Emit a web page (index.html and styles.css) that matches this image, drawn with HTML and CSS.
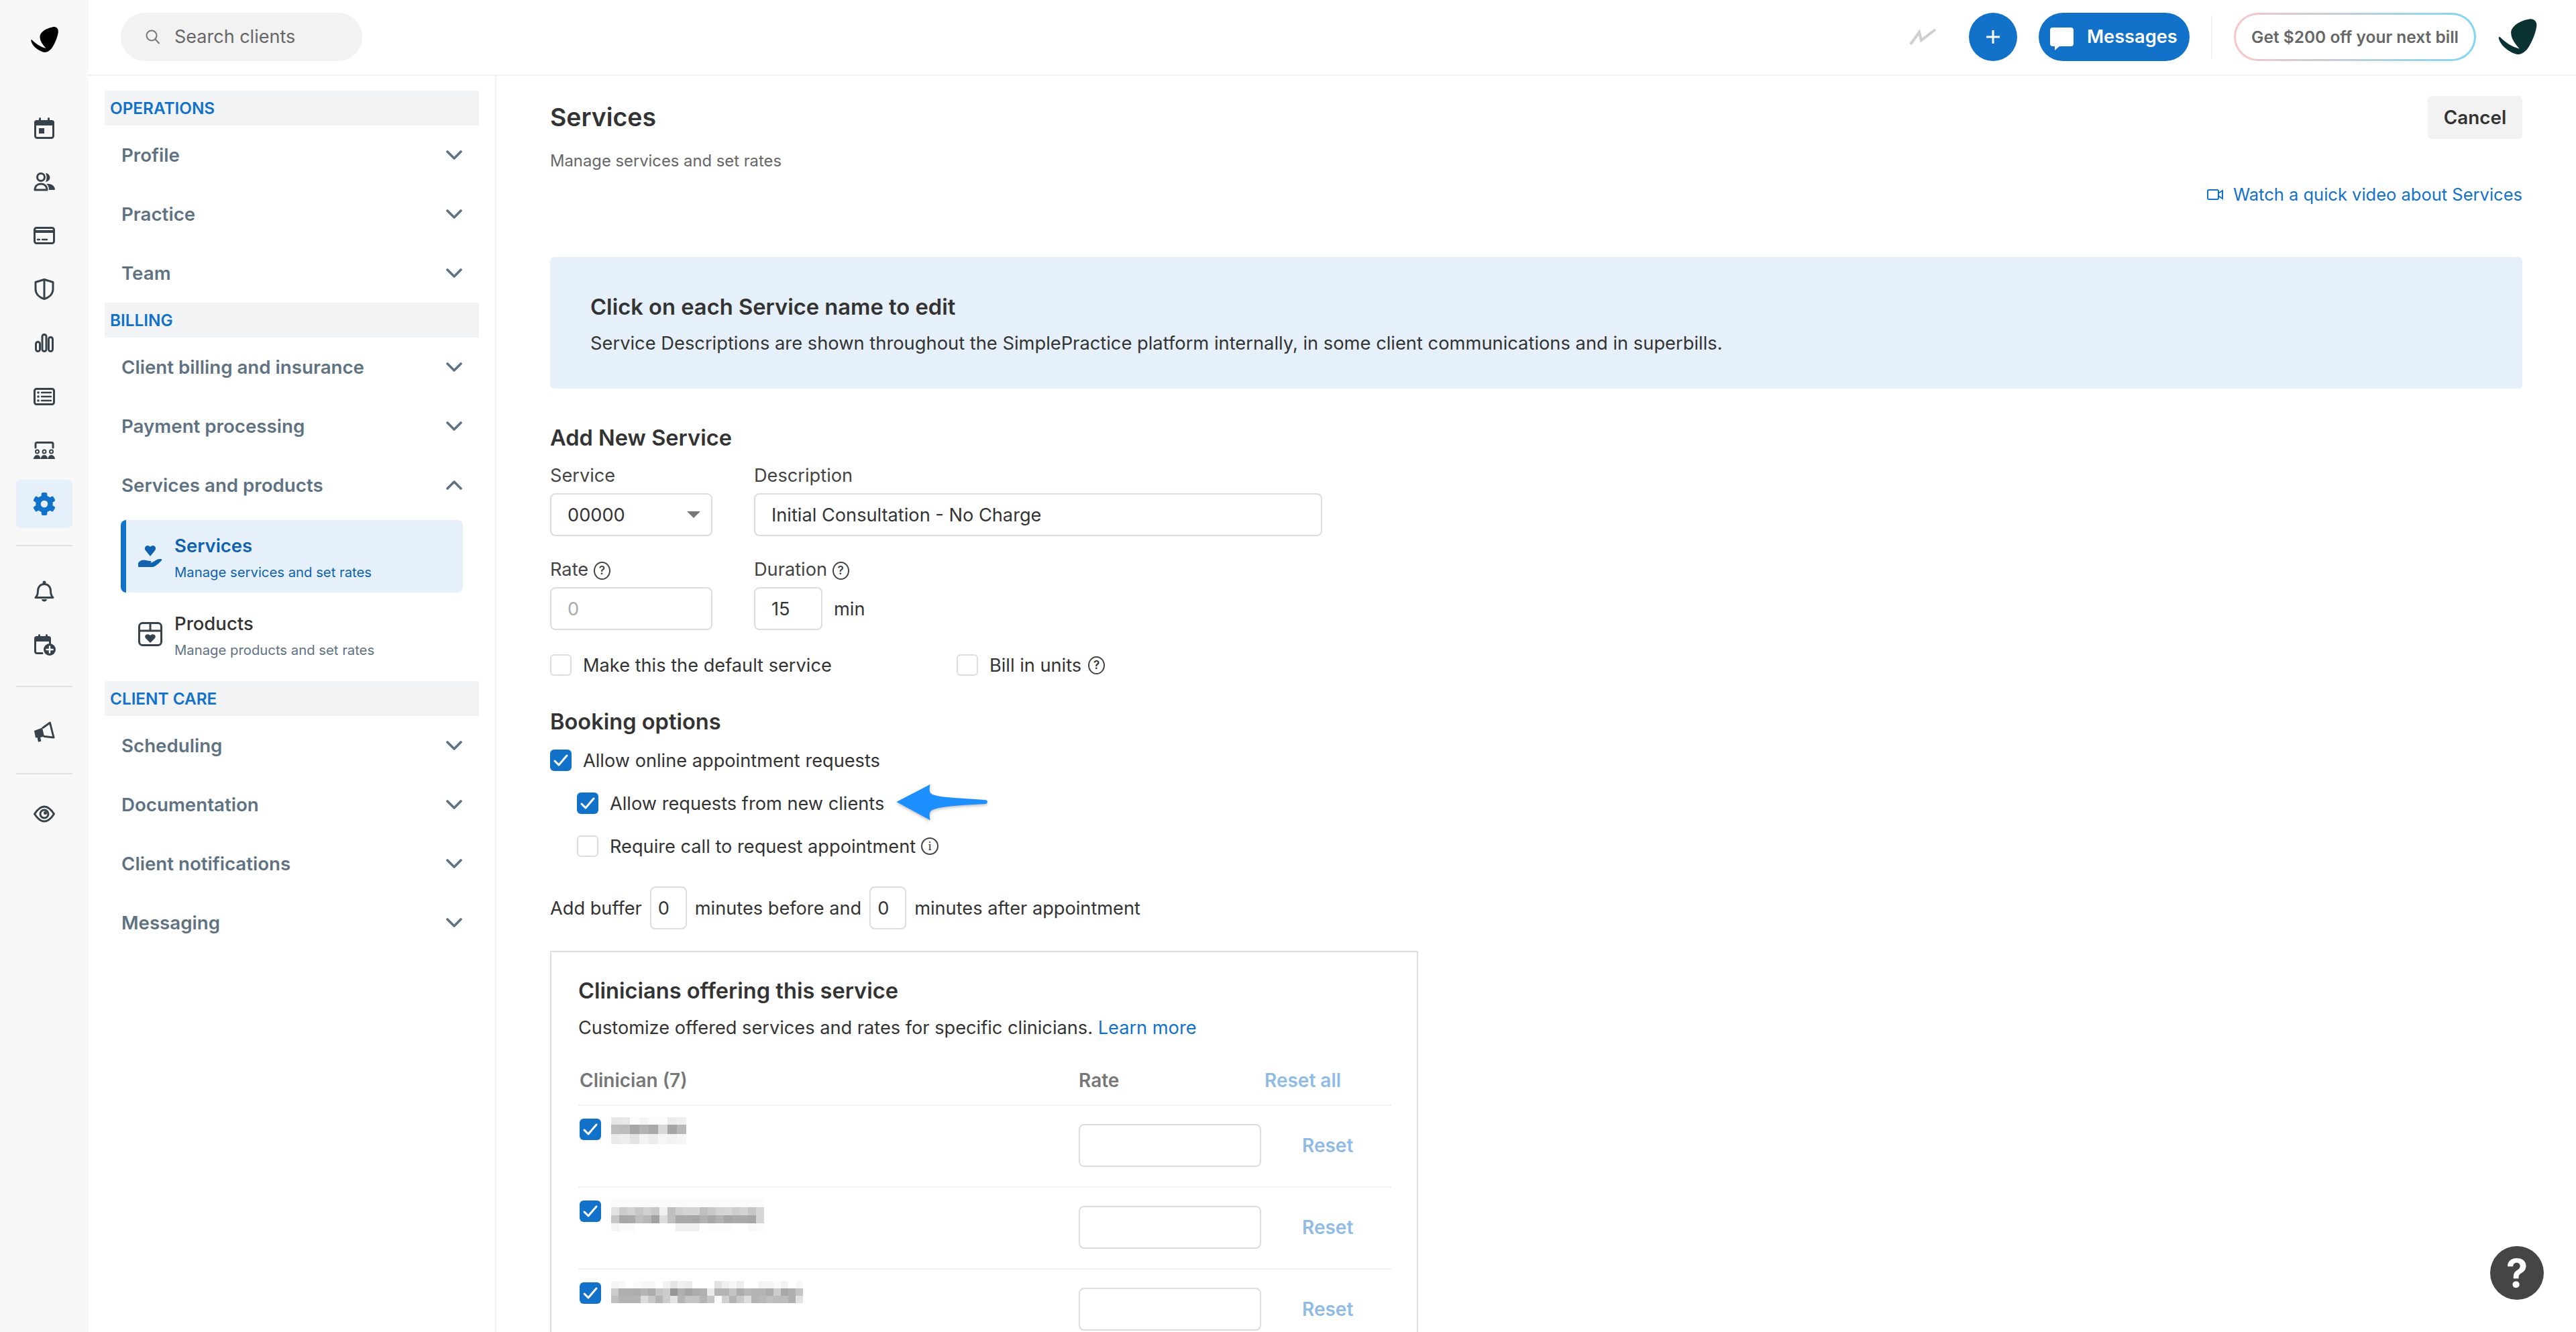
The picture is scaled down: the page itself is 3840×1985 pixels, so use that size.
FILE: index.html
```html
<!DOCTYPE html>
<html lang="en">
<head>
<meta charset="utf-8">
<title>Services</title>
<link rel="stylesheet" href="styles.css">
</head>
<body>
<svg class="sprite" aria-hidden="true">
  <defs>
    <symbol id="leaf" viewBox="0 0 41 38"><path d="M32 .5C37-1 41 2 40.800 7 40.500 14 35 27 31 32 27 37 22 39 18 37.500 10 35 2 28 .3 21 0 19.500 1 18.800 2 19.800 7 25 14 30 22.500 32 17 26 13 20 13.500 14 14 8 23 2 32 .5Z"/></symbol>
    <symbol id="chev" viewBox="0 0 24 14"><path d="M2 2l10 10L22 2" fill="none" stroke="currentColor" stroke-width="3.600" stroke-linecap="round" stroke-linejoin="round"/></symbol>
    <symbol id="tick" viewBox="0 0 32 32"><path d="M7 17l6 6L25 9" fill="none" stroke="#fff" stroke-width="3" stroke-linecap="round" stroke-linejoin="round"/></symbol>
  </defs>
</svg>
<div class="app">
  <nav class="rail">
    <div class="rail-logo"><svg class="logo-small"><use href="#leaf"/></svg></div>
    <a class="rail-item"><svg class="ri" viewBox="0 0 32 32"><rect x="2.500" y="5.500" width="27" height="25" rx="3"/><path class="f" d="M1 8a4 4 0 0 1 4-4h22a4 4 0 0 1 4 4v4H1z"/><rect class="f" x="8" y="0" width="3" height="6" rx="1.500"/><rect class="f" x="21" y="0" width="3" height="6" rx="1.500"/><rect class="f" x="8" y="16" width="8" height="8"/></svg></a>
    <a class="rail-item"><svg class="ri" viewBox="0 0 32 32"><circle cx="11" cy="9" r="5.500"/><path d="M2 28c0-6 4-9 9-9s9 3 9 9z"/><path class="f" d="M18 3a6.500 6.500 0 0 1 0 13c2-3.500 2-9.500 0-13zM23 28h9c0-5-4-9-10-9-1 0-2 .2-2.500.4 2.500 1.600 3.500 4.600 3.500 8.600z"/></svg></a>
    <a class="rail-item"><svg class="ri" viewBox="0 0 32 32"><rect x="1.500" y="4.500" width="29" height="23" rx="3"/><path class="f" d="M1 8h30v4H1z"/><path class="dash" d="M6 22h3M13 22h7"/></svg></a>
    <a class="rail-item"><svg class="ri" viewBox="0 0 32 32"><path d="M16 1.500l13 4v10c0 8-6 13-13 15-7-2-13-7-13-15v-10z"/><path d="M16 2v28"/></svg></a>
    <a class="rail-item"><svg class="ri" viewBox="0 0 32 32"><rect x="3.500" y="14.500" width="6" height="14" rx="3"/><rect x="13" y="3.500" width="6" height="25" rx="3"/><rect x="22.500" y="7.500" width="6" height="21" rx="3"/></svg></a>
    <a class="rail-item"><svg class="ri" viewBox="0 0 32 32"><rect x="1.500" y="4.500" width="29" height="23" rx="3"/><path class="dash" d="M12 10h14M12 16h14M12 22h14"/><circle class="f" cx="7" cy="10" r="1.800"/><circle class="f" cx="7" cy="16" r="1.800"/><circle class="f" cx="7" cy="22" r="1.800"/></svg></a>
    <a class="rail-item"><svg class="ri" viewBox="0 0 32 32"><path d="M3 12V6.500a2 2 0 0 1 2-2h22a2 2 0 0 1 2 2V12"/><circle class="thin" cx="5.500" cy="18" r="2.500"/><circle class="thin" cx="16" cy="18" r="2.500"/><circle class="thin" cx="26.500" cy="18" r="2.500"/><path class="f" d="M0 29c0-3 2.500-6 5.500-6s5 3 5 6zM10.800 29c0-3 2.200-6 5.200-6s5.200 3 5.200 6zM21.500 29c0-3 2-6 5-6s5.500 3 5.500 6z"/></svg></a>
    <a class="rail-item active"><svg class="gear" viewBox="0 0 32 32"><g class="teeth"><rect x="12" y="0" width="8" height="8" rx="2"/><rect x="12" y="0" width="8" height="8" rx="2" transform="rotate(60 16 16)"/><rect x="12" y="0" width="8" height="8" rx="2" transform="rotate(120 16 16)"/><rect x="12" y="0" width="8" height="8" rx="2" transform="rotate(180 16 16)"/><rect x="12" y="0" width="8" height="8" rx="2" transform="rotate(240 16 16)"/><rect x="12" y="0" width="8" height="8" rx="2" transform="rotate(300 16 16)"/></g><circle class="ring" cx="16" cy="16" r="8.500"/></svg></a>
    <div class="rail-div"></div>
    <a class="rail-item"><svg class="ri" viewBox="0 0 32 32"><path d="M3 25.500c3-3 3.500-6 3.500-10 0-6 4-10 9.500-10s9.500 4 9.500 10c0 4 .5 7 3.500 10z"/><circle class="f" cx="16" cy="3" r="2.500"/><path class="f" d="M12 28h8c0 2-2 3.500-4 3.500S12 30 12 28z"/></svg></a>
    <a class="rail-item"><svg class="ri" viewBox="0 0 32 32"><path d="M13 28.500H5a2.500 2.500 0 0 1-2.500-2.500V7A2.500 2.500 0 0 1 5 4.500h17A2.500 2.500 0 0 1 24.500 7v7"/><path class="f" d="M1 7a4 4 0 0 1 4-4h17a4 4 0 0 1 4 4v4H1z"/><rect class="f" x="7" y="0" width="3" height="5" rx="1.500"/><rect class="f" x="18" y="0" width="3" height="5" rx="1.500"/><circle class="f" cx="24" cy="23" r="9"/><path class="w" d="M24 18.500v9M19.500 23h9"/></svg></a>
    <div class="rail-div"></div>
    <a class="rail-item"><svg class="ri" viewBox="0 0 32 32"><path class="f" d="M1 14l12-4.500 3 13-6 1.500 1.500 5.500-4.500 1.200L5.500 24 3 24.500z"/><path d="M14 9.500L24.500 2 30 24l-14-1.500"/></svg></a>
    <div class="rail-div last"></div>
    <a class="rail-item"><svg class="ri" viewBox="0 0 32 32"><path d="M1.500 16C6 9 10.500 5 16 5s10 4 14.500 11C26 23 21.500 27 16 27S6 23 1.500 16z"/><circle cx="16" cy="16" r="6"/><circle class="f" cx="17.500" cy="14.500" r="2.500"/></svg></a>
  </nav>

  <div class="main">
    <header class="topbar">
      <div class="search">
        <svg class="search-ico" viewBox="0 0 22 22"><circle cx="9" cy="9" r="7.500"/><path d="M14.500 14.500L20.500 21"/></svg>
        <span class="search-text">Search clients</span>
      </div>
      <div class="top-right">
        <svg class="trend" viewBox="0 0 41 26"><path d="M2 24L15 6l3 12L39 2"/></svg>
        <button class="round-btn"><svg class="plus" viewBox="0 0 22 22"><path d="M11 1v20M1 11h20"/></svg></button>
        <button class="msg-btn">
          <svg class="bubble" viewBox="0 0 35 34"><path d="M4 0h27a4 4 0 0 1 4 4v20a4 4 0 0 1-4 4H14L7 34v-6H4a4 4 0 0 1-4-4V4a4 4 0 0 1 4-4z"/></svg>
          <span>Messages</span>
        </button>
        <div class="top-sep"></div>
        <div class="promo"><span>Get $200 off your next bill</span></div>
        <svg class="logo-big"><use href="#leaf"/></svg>
      </div>
    </header>

    <div class="below">
      <aside class="sidebar">
        <h3 class="sec"><span>OPERATIONS</span></h3>
        <div class="row"><span>Profile</span><svg class="chev"><use href="#chev"/></svg></div>
        <div class="row"><span>Practice</span><svg class="chev"><use href="#chev"/></svg></div>
        <div class="row"><span>Team</span><svg class="chev"><use href="#chev"/></svg></div>
        <h3 class="sec"><span>BILLING</span></h3>
        <div class="row"><span>Client billing and insurance</span><svg class="chev"><use href="#chev"/></svg></div>
        <div class="row"><span>Payment processing</span><svg class="chev"><use href="#chev"/></svg></div>
        <div class="row"><span>Services and products</span><svg class="chev up"><use href="#chev"/></svg></div>
        <a class="sub current">
          <svg class="sub-ico" viewBox="0 0 36 36"><path d="M18 18l-6.500-8C8 6 11 2 14 2c2 0 3 1 4 2 1-1 2-2 4-2 3 0 6 4 2.500 8z"/><path d="M0 34v-6c2-3 5-4.500 8-4.500 4 0 6 1.500 10 1.500 2 0 2 2.500 0 3h-4 5l10-5.500c3-1 7-.5 6.500 1C33 26 26 34 21 34z"/></svg>
          <span class="sub-text"><b>Services</b><small>Manage services and set rates</small></span>
        </a>
        <a class="sub">
          <svg class="sub-ico plain" viewBox="0 0 36 36"><rect x="1.500" y="1.500" width="33" height="33" rx="5"/><path d="M2 13h32M18 2v11"/><path class="f" d="M18 31l-7-7c-3-4 3-8 7-4 4-4 10 0 7 4z"/></svg>
          <span class="sub-text"><b>Products</b><small>Manage products and set rates</small></span>
        </a>
        <h3 class="sec care"><span>CLIENT CARE</span></h3>
        <div class="row"><span>Scheduling</span><svg class="chev"><use href="#chev"/></svg></div>
        <div class="row"><span>Documentation</span><svg class="chev"><use href="#chev"/></svg></div>
        <div class="row"><span>Client notifications</span><svg class="chev"><use href="#chev"/></svg></div>
        <div class="row"><span>Messaging</span><svg class="chev"><use href="#chev"/></svg></div>
      </aside>

      <main class="content">
        <div class="head">
          <h1><span>Services</span></h1>
          <button class="cancel">Cancel</button>
        </div>
        <p class="sub-title"><span>Manage services and set rates</span></p>
        <div class="video-row">
          <a class="video-link">
            <svg class="video-ico" viewBox="0 0 24 16"><rect x="1" y="1" width="16" height="14" rx="2"/><path d="M17 6l6-4v12l-6-4"/></svg>
            <span>Watch a quick video about Services</span>
          </a>
        </div>
        <section class="banner">
          <h2><span>Click on each Service name to edit</span></h2>
          <p><span>Service Descriptions are shown throughout the SimplePractice platform internally, in some client communications and in superbills.</span></p>
        </section>

        <h2 class="form-title"><span>Add New Service</span></h2>
        <div class="field-row first">
          <div class="field narrow">
            <label>Service</label>
            <div class="select"><span>00000</span><i class="caret"></i></div>
          </div>
          <div class="field">
            <label>Description</label>
            <input class="input wide" value="Initial Consultation - No Charge">
          </div>
        </div>
        <div class="field-row">
          <div class="field narrow">
            <label>Rate <span class="qm big">?</span></label>
            <input class="input full" placeholder="0">
          </div>
          <div class="field">
            <label>Duration <span class="qm">?</span></label>
            <div class="with-unit"><input class="input dur" value="15"><span>min</span></div>
          </div>
        </div>
        <div class="check-pair">
          <label class="check default"><span class="box"></span><span>Make this the default service</span></label>
          <label class="check"><span class="box"></span><span>Bill in units</span><span class="qm big">?</span></label>
        </div>

        <h2 class="form-title booking"><span>Booking options</span></h2>
        <label class="check opt1"><span class="box on"><svg><use href="#tick"/></svg></span><span>Allow online appointment requests</span></label>
        <label class="check nested">
          <span class="box on"><svg><use href="#tick"/></svg></span><span>Allow requests from new clients</span>
          <svg class="callout" viewBox="0 0 145 60"><path d="M2 28L54 1c-1 5-2 10 1 14 10 7 50 7 85 10 3 1 3 5 0 6-35 2-75 3-85 11-3 4-2 9-1 14z"/></svg>
        </label>
        <label class="check nested"><span class="box"></span><span>Require call to request appointment</span><span class="qm info">i</span></label>
        <div class="buffer">
          <span>Add buffer</span><input class="input mini" value="0"><span>minutes before and</span><input class="input mini" value="0"><span>minutes after appointment</span>
        </div>

        <section class="panel">
          <h2 class="panel-title"><span>Clinicians offering this service</span></h2>
          <p class="panel-desc"><span>Customize offered services and rates for specific clinicians.</span> <a>Learn more</a></p>
          <div class="table-head">
            <span class="col-name">Clinician (7)</span>
            <span class="col-rate">Rate</span>
            <a class="reset-all">Reset all</a>
          </div>
          <div class="t-row">
            <div class="col-name"><span class="box on"><svg><use href="#tick"/></svg></span>
              <svg class="blur" width="112" height="40" shape-rendering="crispEdges"><g>
                <rect width="14" height="11" fill="#e6e6e6"/><rect x="14" width="14" height="11" fill="#e8e8e8"/><rect x="28" width="14" height="11" fill="#fcfcfc"/><rect x="42" width="14" height="11" fill="#f6f6f6"/><rect x="56" width="14" height="11" fill="#fbfbfb"/><rect x="70" width="14" height="11" fill="#fcfcfc"/><rect x="84" width="14" height="11" fill="#ececec"/><rect x="98" width="14" height="11" fill="#f0f0f0"/>
                <rect y="11" width="14" height="14" fill="#bebebe"/><rect x="14" y="11" width="14" height="14" fill="#bcbcbc"/><rect x="28" y="11" width="14" height="14" fill="#a6a6a6"/><rect x="42" y="11" width="14" height="14" fill="#b2b2b2"/><rect x="56" y="11" width="14" height="14" fill="#a9a9a9"/><rect x="70" y="11" width="14" height="14" fill="#d8d8d8"/><rect x="84" y="11" width="14" height="14" fill="#a5a5a5"/><rect x="98" y="11" width="14" height="14" fill="#b8b8b8"/>
                <rect y="25" width="14" height="15" fill="#eaeaea"/><rect x="14" y="25" width="14" height="15" fill="#eeeeee"/><rect x="28" y="25" width="14" height="15" fill="#e2e2e2"/><rect x="42" y="25" width="14" height="15" fill="#f2f2f2"/><rect x="56" y="25" width="14" height="15" fill="#ececec"/><rect x="70" y="25" width="14" height="15" fill="#f6f6f6"/><rect x="84" y="25" width="14" height="15" fill="#f2f2f2"/><rect x="98" y="25" width="14" height="15" fill="#f6f6f6"/>
              </g></svg>
            </div>
            <div class="col-rate"><input class="input rate-in"></div>
            <a class="reset">Reset</a>
          </div>
          <div class="t-row">
            <div class="col-name"><span class="box on"><svg><use href="#tick"/></svg></span>
              <svg class="blur" width="228" height="48" shape-rendering="crispEdges"><g>
                <rect width="228" height="12" fill="#fbfbfb"/>
                <rect y="12" width="12" height="12" fill="#e2e2e2"/><rect x="12" y="12" width="12" height="12" fill="#cccccc"/><rect x="24" y="12" width="12" height="12" fill="#d2d2d2"/><rect x="36" y="12" width="12" height="12" fill="#c6c6c6"/><rect x="48" y="12" width="12" height="12" fill="#d0d0d0"/><rect x="60" y="12" width="12" height="12" fill="#c8c8c8"/><rect x="72" y="12" width="12" height="12" fill="#f0f0f0"/><rect x="84" y="12" width="12" height="12" fill="#c0c0c0"/><rect x="96" y="12" width="12" height="12" fill="#cfcfcf"/><rect x="108" y="12" width="12" height="12" fill="#d4d4d4"/><rect x="120" y="12" width="12" height="12" fill="#d4d4d4"/><rect x="132" y="12" width="12" height="12" fill="#bfbfbf"/><rect x="144" y="12" width="12" height="12" fill="#c8c8c8"/><rect x="156" y="12" width="12" height="12" fill="#d4d4d4"/><rect x="168" y="12" width="12" height="12" fill="#d6d6d6"/><rect x="180" y="12" width="12" height="12" fill="#cdcdcd"/><rect x="192" y="12" width="12" height="12" fill="#d4d4d4"/><rect x="204" y="12" width="12" height="12" fill="#c6c6c6"/><rect x="216" y="12" width="12" height="12" fill="#d6d6d6"/>
                <rect y="24" width="12" height="12" fill="#c6c6c6"/><rect x="12" y="24" width="12" height="12" fill="#a8a8a8"/><rect x="24" y="24" width="12" height="12" fill="#aaaaaa"/><rect x="36" y="24" width="12" height="12" fill="#bfbfbf"/><rect x="48" y="24" width="12" height="12" fill="#b8b8b8"/><rect x="60" y="24" width="12" height="12" fill="#a2a2a2"/><rect x="72" y="24" width="12" height="12" fill="#dcdcdc"/><rect x="84" y="24" width="12" height="12" fill="#bfbfbf"/><rect x="96" y="24" width="12" height="12" fill="#a8a8a8"/><rect x="108" y="24" width="12" height="12" fill="#a8a8a8"/><rect x="120" y="24" width="12" height="12" fill="#a6a6a6"/><rect x="132" y="24" width="12" height="12" fill="#b2b2b2"/><rect x="144" y="24" width="12" height="12" fill="#a8a8a8"/><rect x="156" y="24" width="12" height="12" fill="#b2b2b2"/><rect x="168" y="24" width="12" height="12" fill="#a6a6a6"/><rect x="180" y="24" width="12" height="12" fill="#aaaaaa"/><rect x="192" y="24" width="12" height="12" fill="#aaaaaa"/><rect x="204" y="24" width="12" height="12" fill="#a6a6a6"/><rect x="216" y="24" width="12" height="12" fill="#d6d6d6"/>
                <rect y="36" width="12" height="12" fill="#f4f4f4"/><rect x="12" y="36" width="24" height="12" fill="#fafafa"/><rect x="96" y="36" width="36" height="12" fill="#f0f0f0"/><rect x="144" y="36" width="36" height="12" fill="#fbfbfb"/><rect x="204" y="36" width="12" height="12" fill="#f8f8f8"/><rect x="216" y="36" width="12" height="12" fill="#fbfbfb"/>
              </g></svg>
            </div>
            <div class="col-rate"><input class="input rate-in"></div>
            <a class="reset">Reset</a>
          </div>
          <div class="t-row">
            <div class="col-name"><span class="box on"><svg><use href="#tick"/></svg></span>
              <svg class="blur" width="286" height="33" shape-rendering="crispEdges"><g>
                <rect width="11" height="11" fill="#f4f4f4"/><rect x="11" width="11" height="11" fill="#f8f8f8"/><rect x="33" width="11" height="11" fill="#fafafa"/><rect x="44" width="22" height="11" fill="#f8f8f8"/><rect x="77" width="11" height="11" fill="#f2f2f2"/><rect x="88" width="11" height="11" fill="#e6e6e6"/><rect x="99" width="11" height="11" fill="#f0f0f0"/><rect x="110" width="11" height="11" fill="#ececec"/><rect x="154" width="11" height="11" fill="#e2e2e2"/><rect x="165" width="11" height="11" fill="#f0f0f0"/><rect x="176" width="11" height="11" fill="#f8f8f8"/><rect x="187" width="11" height="11" fill="#eeeeee"/><rect x="220" width="22" height="11" fill="#f4f4f4"/><rect x="242" width="11" height="11" fill="#fafafa"/><rect x="253" width="11" height="11" fill="#f2f2f2"/><rect x="275" width="11" height="11" fill="#f8f8f8"/>
                <rect y="11" width="11" height="11" fill="#cccccc"/><rect x="11" y="11" width="22" height="11" fill="#b0b0b0"/><rect x="33" y="11" width="11" height="11" fill="#acacac"/><rect x="44" y="11" width="11" height="11" fill="#b4b4b4"/><rect x="55" y="11" width="11" height="11" fill="#acacac"/><rect x="66" y="11" width="11" height="11" fill="#c4c4c4"/><rect x="77" y="11" width="11" height="11" fill="#cccccc"/><rect x="88" y="11" width="11" height="11" fill="#969696"/><rect x="99" y="11" width="11" height="11" fill="#b0b0b0"/><rect x="110" y="11" width="11" height="11" fill="#a4a4a4"/><rect x="121" y="11" width="11" height="11" fill="#acacac"/><rect x="132" y="11" width="11" height="11" fill="#b0b0b0"/><rect x="143" y="11" width="11" height="11" fill="#eaeaea"/><rect x="154" y="11" width="22" height="11" fill="#b4b4b4"/><rect x="176" y="11" width="11" height="11" fill="#c4c4c4"/><rect x="187" y="11" width="11" height="11" fill="#acacac"/><rect x="198" y="11" width="11" height="11" fill="#b8b8b8"/><rect x="209" y="11" width="22" height="11" fill="#b4b4b4"/><rect x="231" y="11" width="11" height="11" fill="#acacac"/><rect x="242" y="11" width="11" height="11" fill="#cccccc"/><rect x="253" y="11" width="11" height="11" fill="#a8a8a8"/><rect x="264" y="11" width="11" height="11" fill="#b0b0b0"/><rect x="275" y="11" width="11" height="11" fill="#c4c4c4"/>
                <rect y="22" width="11" height="11" fill="#c0c0c0"/><rect x="11" y="22" width="33" height="11" fill="#b4b4b4"/><rect x="44" y="22" width="11" height="11" fill="#dcdcdc"/><rect x="55" y="22" width="11" height="11" fill="#c8c8c8"/><rect x="66" y="22" width="11" height="11" fill="#b4b4b4"/><rect x="77" y="22" width="11" height="11" fill="#cccccc"/><rect x="88" y="22" width="11" height="11" fill="#e4e4e4"/><rect x="99" y="22" width="11" height="11" fill="#b4b4b4"/><rect x="110" y="22" width="22" height="11" fill="#c4c4c4"/><rect x="132" y="22" width="11" height="11" fill="#b4b4b4"/><rect x="143" y="22" width="11" height="11" fill="#c4c4c4"/><rect x="154" y="22" width="11" height="11" fill="#fafafa"/><rect x="165" y="22" width="11" height="11" fill="#d0d0d0"/><rect x="176" y="22" width="11" height="11" fill="#b4b4b4"/><rect x="187" y="22" width="11" height="11" fill="#c8c8c8"/><rect x="198" y="22" width="11" height="11" fill="#dcdcdc"/><rect x="209" y="22" width="11" height="11" fill="#b4b4b4"/><rect x="220" y="22" width="11" height="11" fill="#b8b8b8"/><rect x="231" y="22" width="11" height="11" fill="#c0c0c0"/><rect x="242" y="22" width="22" height="11" fill="#bcbcbc"/><rect x="264" y="22" width="11" height="11" fill="#b0b0b0"/><rect x="275" y="22" width="11" height="11" fill="#e2e2e2"/>
              </g></svg>
            </div>
            <div class="col-rate"><input class="input rate-in"></div>
            <a class="reset">Reset</a>
          </div>
        </section>
      </main>
    </div>
  </div>
</div>
<button class="help">?</button>
</body>
</html>
```
FILE: styles.css
```css
* { box-sizing: border-box; }
html, body { margin: 0; height: 1985px; overflow: hidden; background: #fff; }
body { font-family: Inter, "Liberation Sans", sans-serif; font-size: 27.2px; color: #333; position: relative; }
a { color: inherit; text-decoration: none; }
button { font: inherit; border: 0; padding: 0; }
h1, h2, h3, p { margin: 0; }
.sprite { position: absolute; width: 0; height: 0; }

.app { display: flex; height: 1985px; overflow: hidden; }

/* rail */
.rail { width: 132px; flex: none; background: #f8f8f8; display: flex; flex-direction: column; align-items: center; padding-top: 40px; }
.rail-logo { height: 111px; }
.logo-small { width: 41px; height: 38px; fill: #000; display: block; }
.rail-item { width: 84px; height: 72px; margin: 4px 0; display: flex; align-items: center; justify-content: center; border-radius: 8px; }
.rail-item.active { background: #e6f0fa; }
.ri { width: 32px; height: 32px; fill: none; stroke: #37424a; stroke-width: 3; stroke-linejoin: round; stroke-linecap: round; overflow: visible; }
.ri .f { fill: #37424a; stroke: none; }
.ri .thin { stroke-width: 2; }
.ri .dash { stroke-width: 2.4; }
.ri .w { stroke: #fff; stroke-width: 2.5; }
.gear { width: 34px; height: 34px; }
.gear .teeth { fill: #1271c8; }
.gear .ring { fill: none; stroke: #1271c8; stroke-width: 7; }
.rail-div { width: 84px; height: 2px; background: #e0e0e0; margin: 21px 0 27px; flex: none; }
.rail-div.last { margin-bottom: 19px; }

/* layout */
.main { flex: 1; display: flex; flex-direction: column; min-width: 0; }
.topbar { height: 113px; border-bottom: 2px solid #f2f2f2; display: flex; align-items: center; padding: 0 58px 2px 48px; flex: none; }
.search { width: 360px; height: 72px; border-radius: 36px; background: #f2f2f2; display: flex; align-items: center; padding-left: 37px; }
.search-ico { width: 22px; height: 22px; fill: none; stroke: #777; stroke-width: 2; margin-right: 21px; }
.search-text { color: #666; font-size: 27px; }
.top-right { margin-left: auto; display: flex; align-items: center; }
.trend { width: 41px; height: 26px; fill: none; stroke: #cfcfcf; stroke-width: 4; margin-right: 48px; }
.round-btn { width: 72px; height: 72px; border-radius: 50%; background: #1271c8; display: flex; align-items: center; justify-content: center; margin-right: 32px; }
.plus { width: 22px; height: 22px; stroke: #fff; stroke-width: 3; fill: none; }
.msg-btn { width: 225px; height: 72px; border-radius: 36px; background: #1271c8; color: #fff; font-weight: 600; font-size: 27.2px; display: flex; align-items: center; padding-left: 17px; margin-right: 32px; }
.bubble { width: 35px; height: 34px; fill: #fff; margin-right: 20px; margin-top: 6px; }
.top-sep { width: 2px; height: 64px; background: #f2f2f2; margin-right: 32px; }
.promo { width: 361px; height: 72px; border-radius: 36px; border: 3px solid transparent; background: linear-gradient(#fff, #fff) padding-box, linear-gradient(90deg, #f8c6c8, #7fd8f0) border-box; display: flex; align-items: center; justify-content: center; color: #666; font-weight: 600; font-size: 24.5px; margin-right: 33px; }
.logo-big { width: 58px; height: 53px; fill: #0b3233; }

.below { flex: 1; display: flex; min-height: 0; }
.sidebar { width: 608px; flex: none; border-right: 2px solid #f2f2f2; padding: 22px 24px 0; }
.sec { height: 52px; background: #f1f3f5; color: #1271c8; font-size: 24.3px; font-weight: 600; display: flex; align-items: center; padding-left: 8px; }
.sec.care { margin-top: 16px; }
.row { height: 88px; display: flex; align-items: center; justify-content: space-between; padding: 0 25px; color: #5f7282; font-weight: 600; font-size: 27.7px; }
.chev { width: 24px; height: 14px; color: #5f7282; }
.chev.up { transform: rotate(180deg); }
.sub { display: flex; align-items: center; height: 108px; margin: 0 24px 8px; padding-left: 26px; border-radius: 8px; }
.sub.current { background: #e6f0fa; border-left: 8px solid #1271c8; padding-left: 18px; color: #0f62ad; margin-top: 8px; }
.sub-ico { width: 36px; height: 36px; margin-right: 18px; fill: #0f62ad; flex: none; }
.sub-ico.plain { fill: none; stroke: #37424a; stroke-width: 3; }
.sub-ico.plain .f { fill: #37424a; stroke: none; }
.sub-text { display: flex; flex-direction: column; padding-top: 5px; }
.sub-text b { font-weight: 600; font-size: 27.5px; line-height: 36px; margin-bottom: 7px; }
.sub.current .sub-text b { color: #0f62ad; }
.sub:not(.current) .sub-text b { color: #333; font-weight: 500; }
.sub-text small { font-size: 20.3px; line-height: 30px; color: #5f7282; }
.sub.current .sub-text small { color: #0f62ad; }

/* content */
.content { flex: 1; min-width: 0; padding: 30px 80px 0; }
.head { display: flex; justify-content: space-between; align-items: center; height: 64px; }
h1 { font-size: 37.4px; font-weight: 600; color: #333; line-height: 64px; }
.cancel { width: 141px; height: 64px; background: #f2f2f2; border-radius: 6px; font-weight: 600; font-size: 27.8px; color: #333; }
.sub-title { margin-top: 17px; line-height: 32px; color: #666; font-size: 23.8px; }
.video-row { margin-top: 18px; display: flex; justify-content: flex-end; }
.video-link { display: flex; align-items: center; color: #1271c8; line-height: 32px; font-size: 25.5px; }
.video-ico { width: 24px; height: 16px; fill: none; stroke: #1271c8; stroke-width: 2; margin-right: 15px; }
.banner { margin-top: 77px; height: 196px; background: #e6f0fa; border-radius: 6px; padding: 54px 60px 0; }
.banner h2 { font-size: 32.7px; font-weight: 600; line-height: 40px; margin-bottom: 17px; }
.banner p { font-size: 27.3px; line-height: 36px; color: #333; }
.form-title { font-size: 32.6px; font-weight: 600; line-height: 36px; margin-top: 55px; color: #333; }
.form-title.booking { margin-top: 50px; }
.field-row { display: flex; margin-top: 34px; }
.field-row.first { margin-top: 23px; }
.field { display: flex; flex-direction: column; }
.field.narrow { width: 304px; }
.field label { line-height: 32px; margin-bottom: 10px; color: #444; }
.input, .select { height: 64px; border: 2px solid #ddd; border-radius: 8px; font: inherit; color: #333; padding: 0 24px; background: #fff; outline: none; }
.input::placeholder { color: #aaa; }
.select { width: 242px; display: flex; align-items: center; justify-content: space-between; padding-right: 16px; }
.caret { width: 0; height: 0; border-left: 10px solid transparent; border-right: 10px solid transparent; border-top: 10px solid #777; }
.full { width: 242px; }
.wide { width: 847px; }
.dur { width: 102px; }
.with-unit { display: flex; align-items: center; gap: 17px; }
.qm { display: inline-flex; width: 25px; height: 27px; border: 2px solid #444; border-radius: 50%; align-items: center; justify-content: center; font-size: 17px; font-weight: 600; vertical-align: 2px; }
.check { display: flex; align-items: center; height: 32px; gap: 17px; color: #333; }
.box { width: 32px; height: 32px; border: 2px solid #ddd; border-radius: 6px; background: #fff; display: block; flex: none; }
.box.on { background: #1271c8; border: 0; }
.box svg { width: 32px; height: 32px; display: block; }
.check-pair { display: flex; margin-top: 36px; }
.check.default { width: 606px; }
.check .qm { margin-left: -7px; }
.opt1 { margin-top: 24px; }
.nested { margin-top: 32px; margin-left: 40px; }
.callout { width: 145px; height: 58px; margin: -13px 0 -13px -3px; fill: #1e8fff; filter: drop-shadow(0 2px 2px rgba(0,0,0,.25)); }
.check .qm.info { font-family: "Liberation Serif", serif; font-weight: 400; font-size: 19px; width: 26px; height: 26px; border-width: 2px; margin-left: -9px; }
.buffer { margin-top: 44px; display: flex; align-items: center; gap: 12px; }
.mini { width: 55px; height: 64px; padding: 0 0 0 10px; }
.panel { margin-top: 32px; width: 1294px; height: 568px; border: 2px solid #ddd; border-bottom: 0; padding: 37px 38px 0 40px; }
.panel-title { font-size: 32.6px; font-weight: 600; line-height: 40px; }
.panel-desc { line-height: 32px; margin-top: 20px; }
.panel-desc a { color: #1271c8; }
.table-head { display: flex; align-items: center; height: 54px; margin-top: 46px; padding: 0 0 20px 2px; color: #777; font-weight: 600; font-size: 28px; border-bottom: 2px solid #f2f2f2; }
.col-name { width: 744px; display: flex; flex: none; }
.col-rate { flex: none; width: 277px; }
.reset-all, .reset { color: #8fbbe4; font-weight: 600; font-size: 28px; }
.t-row { display: flex; height: 122px; padding: 19px 0 0 2px; border-bottom: 2px solid #f2f2f2; }
.t-row:last-child { height: 94px; border-bottom: 0; }
.t-row .box { margin-right: 15px; }
.blur { margin-top: -2px; flex: none; }
.t-row .col-rate { padding-top: 8px; }
.rate-in { width: 272px; }
.reset { margin-left: 56px; padding-top: 24px; line-height: 32px; }

.help { position: absolute; left: 3712px; top: 1857px; width: 80px; height: 80px; border-radius: 50%; background: #454545; color: #fff; font-size: 58px; font-weight: 700; line-height: 80px; text-align: center; }
```
